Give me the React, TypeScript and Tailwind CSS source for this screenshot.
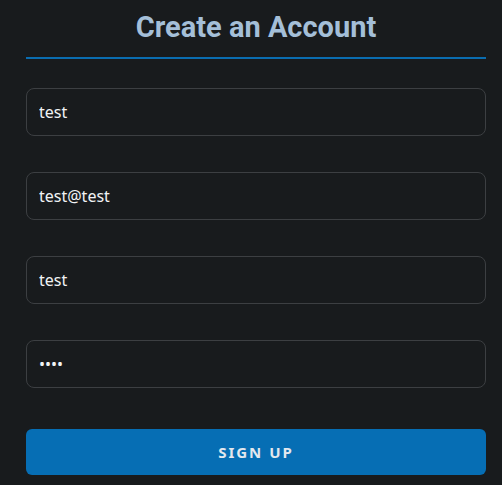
import React, { useState } from 'react';

const App: React.FC = () => {
  const [username, setUsername] = useState('test');
  const [email, setEmail] = useState('test@test');
  const [name, setName] = useState('test');
  const [password, setPassword] = useState('test');

  const inputClass =
    "w-full h-12 rounded-lg border border-[#3c3f42] bg-[#181b1d] px-3 text-base text-[#f1f3f5] outline-none font-['Noto_Sans',sans-serif]";

  return (
    <div className="min-h-screen bg-[#181b1d] pl-[26px] pr-[16px] pt-[9px]">
      <h1 className="text-center text-[29px] leading-9 font-bold text-[#a4bfd8] font-['Roboto',sans-serif]">
        Create an Account
      </h1>
      <div className="mt-[12px] h-[2px] bg-[#0a6db0]" />
      <form className="mt-[29px] flex flex-col gap-9" onSubmit={(e) => e.preventDefault()}>
        <input className={inputClass} value={username} onChange={(e) => setUsername(e.target.value)} />
        <input className={inputClass} value={email} onChange={(e) => setEmail(e.target.value)} />
        <input className={inputClass} value={name} onChange={(e) => setName(e.target.value)} />
        <input
          type="password"
          className={inputClass}
          value={password}
          onChange={(e) => setPassword(e.target.value)}
        />
        <button
          type="submit"
          className="mt-[5px] h-[46px] w-full rounded-md bg-[#066eb4] text-[15px] font-bold tracking-[2px] text-[#e3e8ee] font-['Noto_Sans',sans-serif]"
        >
          SIGN UP
        </button>
      </form>
    </div>
  );
};

export default App;
